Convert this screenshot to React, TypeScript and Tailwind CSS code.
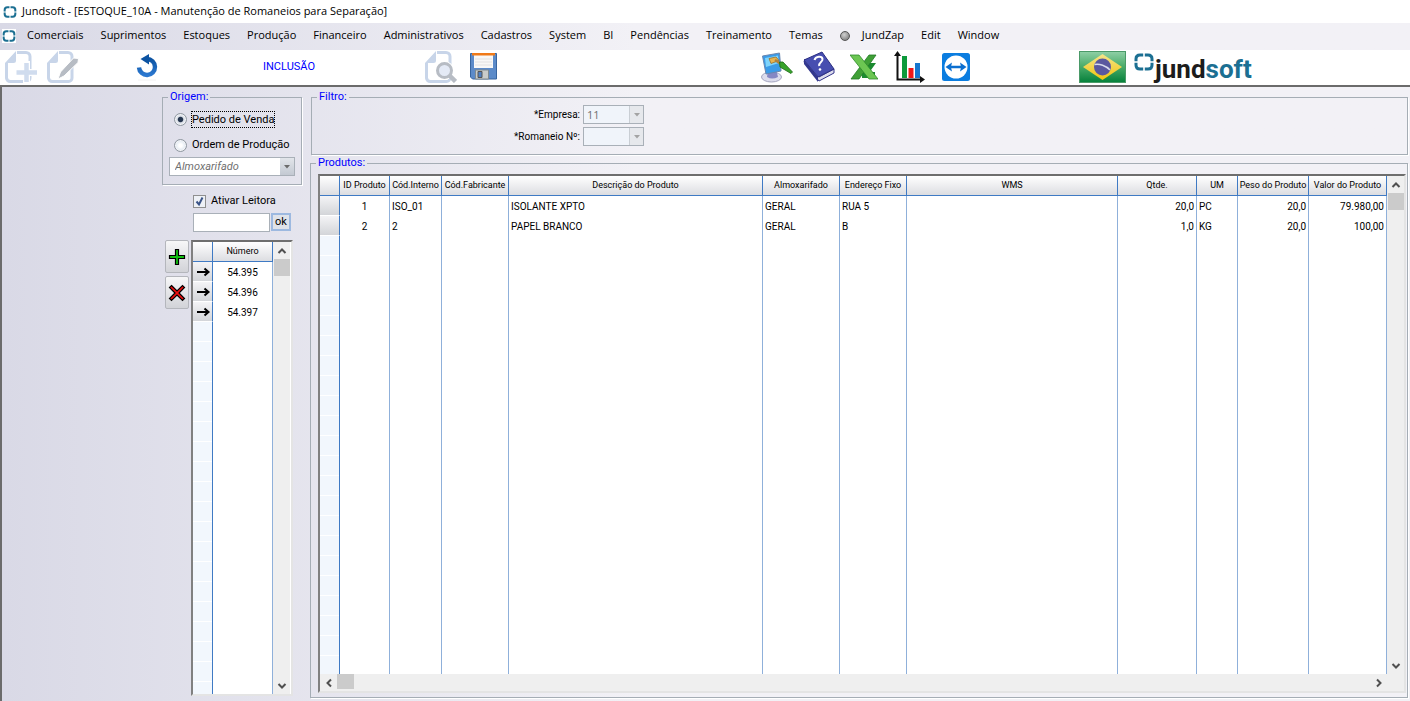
import { useState, type ReactNode } from 'react';

const menuLeft = [
  'Comerciais', 'Suprimentos', 'Estoques', 'Produção', 'Financeiro', 'Administrativos',
  'Cadastros', 'System', 'BI', 'Pendências', 'Treinamento', 'Temas',
];

const columns = [
  { label: 'ID Produto', width: 'w-[50px]', align: 'text-center' },
  { label: 'Cód.Interno', width: 'w-[52px]', align: 'text-left' },
  { label: 'Cód.Fabricante', width: 'w-[67px]', align: 'text-left' },
  { label: 'Descrição do Produto', width: '', align: 'text-left' },
  { label: 'Almoxarifado', width: 'w-[77px]', align: 'text-left' },
  { label: 'Endereço Fixo', width: 'w-[67px]', align: 'text-left' },
  { label: 'WMS', width: 'w-[211px]', align: 'text-left' },
  { label: 'Qtde.', width: 'w-[79px]', align: 'text-right' },
  { label: 'UM', width: 'w-[41px]', align: 'text-left' },
  { label: 'Peso do Produto', width: 'w-[71px]', align: 'text-right' },
  { label: 'Valor do Produto', width: 'w-[78px]', align: 'text-right' },
];

const products = [
  ['1', 'ISO_01', '', 'ISOLANTE XPTO', 'GERAL', 'RUA 5', '', '20,0', 'PC', '20,0', '79.980,00'],
  ['2', '2', '', 'PAPEL BRANCO', 'GERAL', 'B', '', '1,0', 'KG', '20,0', '100,00'],
];

const orders = ['54.395', '54.396', '54.397'];

const headCell =
  'h-5 border-b border-r border-[#3f7ac4] bg-linear-to-b from-white to-[#dcdde1] p-0 text-[9px] font-normal leading-[19px]';
const rowHead = 'h-5 border-r border-r-[#3f7ac4] border-b border-b-white bg-linear-to-b from-[#f4f4f6] to-[#d3d5d9] p-0';
const stripes =
  'border-r border-[#3f7ac4] bg-[repeating-linear-gradient(to_bottom,#f2f7fd_0px,#f2f7fd_19px,#ffffff_19px,#ffffff_20px)] p-0';

function Brand({ className }: { className: string }) {
  return (
    <svg viewBox="0 0 20 18" className={className} fill="none" stroke="#1b6f92" strokeWidth="3" aria-hidden="true">
      <path d="M9.200 2H6Q2 2 2 6v2.200M10.800 2H14q4 0 4 4v2.200M9.200 16H6q-4 0-4-4V9.800M10.800 16H14q4 0 4-4V9.800" />
    </svg>
  );
}

function Chevron({ d }: { d: string }) {
  return (
    <svg viewBox="0 0 10 10" className="size-[10px]" fill="none" stroke="#505050" strokeWidth="2" aria-hidden="true">
      <path d={d} />
    </svg>
  );
}

function VerticalScroll() {
  return (
    <div className="flex w-[17px] shrink-0 flex-col bg-[#efefef] pl-px">
      <button type="button" aria-label="Rolar para cima" className="flex h-[17px] items-center justify-center">
        <Chevron d="M1.500 7 5 3.500 8.500 7" />
      </button>
      <div className="flex-1">
        <div className="h-[17px] bg-[#cbcbcb]" />
      </div>
      <button type="button" aria-label="Rolar para baixo" className="flex h-[17px] items-center justify-center">
        <Chevron d="M1.500 3 5 6.500 8.500 3" />
      </button>
    </div>
  );
}

function Group({ title, className, children }: { title: string; className: string; children: ReactNode }) {
  return (
    <fieldset className={`min-w-0 border border-[#a5adb5] shadow-[1px_1px_0_#ffffff] ${className}`}>
      <legend className="ml-[5px] px-0.5 text-[11px] leading-4 text-[#0000ff]">{title}</legend>
      {children}
    </fieldset>
  );
}

function Arrow({ className }: { className: string }) {
  return (
    <span className={`pointer-events-none absolute inset-y-px right-px flex w-[14px] items-center justify-center ${className}`}>
      <svg viewBox="0 0 6 4" className="w-[6px]" aria-hidden="true">
        <path d="M0 0h6L3 3.500z" fill="currentColor" />
      </svg>
    </span>
  );
}

function FilterSelect({ id, label, value }: { id: string; label: string; value: string }) {
  return (
    <div className="flex items-center gap-[3px]">
      <label htmlFor={id} className="w-[262px] text-right text-[10px]">{label}</label>
      <div className="relative w-[61px]">
        <select
          id={id}
          disabled
          className="block h-[19px] w-full appearance-none border border-[#a9b0b8] bg-[#f0f4fa] pl-[3px] font-['Open_Sans',sans-serif] text-[11px] leading-4 text-[#6f6f6f] opacity-100"
        >
          <option>{value}</option>
        </select>
        <Arrow className="border-l border-[#c9ced4] bg-[#e6e8ec] text-[#a3a3a3]" />
      </div>
    </div>
  );
}

function ToolButton({ label, className, children }: { label: string; className: string; children: ReactNode }) {
  return (
    <button type="button" aria-label={label} className={`flex h-8 shrink-0 items-center justify-center ${className}`}>
      {children}
    </button>
  );
}

function Sheet() {
  return (
    <>
      <path d="M12 1.500h9a4 4 0 0 1 4 4V27a3.500 3.500 0 0 1-3.500 3.500h-16A4 4 0 0 1 1.500 27V12" fill="none" stroke="#c8d5e9" strokeWidth="3" />
      <path d="M0 12 11 0v9.500a2.500 2.500 0 0 1-2.500 2.500z" fill="#c8d5e9" />
    </>
  );
}

function Toolbar() {
  return (
    <div className="flex h-[35px] shrink-0 items-start overflow-hidden bg-white pl-[5px] pt-px">
      <ToolButton label="Novo" className="w-8">
        <svg viewBox="0 0 32 32" className="size-8">
          <Sheet />
          <path d="M21.500 10v22M10 21.500h22" stroke="#fff" strokeWidth="7" />
          <path d="M21.500 12v19M11.500 21.500H32" stroke="#d0dcee" strokeWidth="4.500" />
        </svg>
      </ToolButton>
      <ToolButton label="Editar" className="ml-[10px] w-8">
        <svg viewBox="0 0 32 32" className="size-8">
          <Sheet />
          <path d="m11 28 2.500-7L26.500 7l5 .5-.5 4-14 13.500z" fill="#b7bcc4" stroke="#fff" strokeWidth="1" />
        </svg>
      </ToolButton>
      <ToolButton label="Desfazer" className="ml-[57px] w-6">
        <svg viewBox="0 0 24 28" className="h-7 w-6">
          <defs>
            <linearGradient id="undo" x1="0" y1="0" x2="0" y2="1">
              <stop offset="0" stopColor="#0c53a2" />
              <stop offset="1" stopColor="#2b78d0" />
            </linearGradient>
          </defs>
          <path d="M3 14.500a8 8 0 1 0 8-8.500" fill="none" stroke="url(#undo)" strokeWidth="4.400" />
          <path d="M4.500 6 13 1v10.500z" fill="#0c53a2" />
          <path d="M2 27h18" stroke="#f2f2f2" />
        </svg>
      </ToolButton>
      <span className="ml-[103px] w-[162px] text-[11px] leading-8 text-[#0000ff]">INCLUSÃO</span>
      <ToolButton label="Pesquisar" className="w-8">
        <svg viewBox="0 0 32 32" className="size-8">
          <Sheet />
          <circle cx="19.500" cy="19.500" r="9.500" fill="#fff" />
          <path d="m24 24 6.500 6.500" stroke="#b7bcc4" strokeWidth="4.500" />
          <circle cx="19.500" cy="19.500" r="7" fill="#e4eaf6" stroke="#b7bcc4" strokeWidth="3" />
        </svg>
      </ToolButton>
      <ToolButton label="Salvar" className="ml-[13px] w-[27px]">
        <svg viewBox="0 0 27 28" className="h-7 w-[27px]">
          <path d="M.5.500h26V26h-24l-2-2z" fill="#5c8bc9" stroke="#38659f" />
          <path d="M4 1h19v14H4z" fill="#f8f8f7" />
          <path d="M2 0h23v2.500H2z" fill="#f07a18" />
          <path d="M5 6h17M5 9h17M5 12h17" stroke="#e2e2e2" />
          <path d="M5.500 17h13v9h-13z" fill="#c9ccca" stroke="#7f8a8f" />
          <path d="M8 18.500h4v6H8z" fill="#4f80c2" stroke="#555" />
        </svg>
      </ToolButton>
      <ToolButton label="Aparência" className="ml-[264px] w-8">
        <svg viewBox="0 0 32 32" className="size-8">
          <ellipse cx="10.500" cy="26" rx="10" ry="5" fill="#dcdcec" stroke="#a3a4bf" />
          <path d="m7 19 8-1 2 8q-6 3-11 0z" fill="#8487c4" />
          <path d="m1.500 5 17-3 1.500 18-15 3z" fill="#3a9be8" stroke="#6a86ae" />
          <path d="m4 7 13-2.500L18 12 5 16z" fill="#7fd4fb" />
          <path d="m8 7.500 7-1.500 3 3.500-8 3z" fill="#e6b451" stroke="#92641d" strokeWidth=".7" />
          <path d="m14 9 6 4" stroke="#b1803a" strokeWidth="2.500" />
          <path d="m18.500 11 3.500 0 9.500 10-1.500 1.500L19 16z" fill="#38a32c" stroke="#1d6a18" strokeWidth=".8" />
        </svg>
      </ToolButton>
      <ToolButton label="Ajuda" className="ml-[10px] w-8">
        <svg viewBox="0 0 32 32" className="size-8">
          <path d="m1 11 15 19 15-8v-4L16 26 2 8z" fill="#dcdcec" stroke="#32348a" />
          <path d="M1 9 19 1l12 17-16 8z" fill="#474eb0" stroke="#2b2f83" />
          <path d="m1 9 14 17v5L1 13z" fill="#31368d" />
          <path d="M11.500 9c1-4 7.500-4.500 8-1 .4 3-4 3-3.300 7" fill="none" stroke="#fff" strokeWidth="2" />
          <circle cx="17" cy="18.500" r="1.300" fill="#fff" />
        </svg>
      </ToolButton>
      <ToolButton label="Exportar para Excel" className="ml-[15px] w-7">
        <svg viewBox="0 0 28 28" className="size-7">
          <path d="M15 10h11l-5 7h-7zM12 19h13v6H12z" fill="#1b8a30" />
          <path d="m19 2 7 0L9 26H1z" fill="#3f9f36" stroke="#217a24" strokeWidth=".8" />
          <path d="M0 2h9l19 24h-9z" fill="#6cc652" stroke="#2e8b2c" strokeWidth=".8" />
        </svg>
      </ToolButton>
      <ToolButton label="Gráficos" className="ml-4 w-8">
        <svg viewBox="0 0 32 32" className="size-8">
          <path d="M8 5h5v22H8z" fill="#0c9a3b" />
          <path d="M14.500 17h5v10h-5z" fill="#f01818" />
          <path d="M21 12h5v15h-5z" fill="#1677cf" />
          <path d="M3.500 4v24.500H28" fill="none" stroke="#111" strokeWidth="2" />
          <path d="M0 5 3.500 0 7 5zM26 25v7l5-3.500z" fill="#111" />
        </svg>
      </ToolButton>
      <ToolButton label="Acesso remoto" className="ml-4 w-7">
        <svg viewBox="0 0 28 28" className="size-7">
          <rect width="28" height="28" rx="2.500" fill="#0b7de0" />
          <circle cx="14" cy="14" r="11.500" fill="#fff" />
          <path d="m3.500 14 6.500-4.500-.8 3.200h9.600L18 9.500l6.500 4.500-6.500 4.500.8-3.200H9.200l.8 3.200z" fill="#0b6fd0" />
        </svg>
      </ToolButton>
      <ToolButton label="Idioma: português" className="ml-[109px] w-12">
        <svg viewBox="0 0 48 32" className="h-8 w-12">
          <defs>
            <linearGradient id="flag" x1="0" y1="0" x2="0" y2="1">
              <stop offset="0" stopColor="#8fd0a6" />
              <stop offset=".45" stopColor="#4fae6d" />
              <stop offset="1" stopColor="#04803a" />
            </linearGradient>
            <linearGradient id="rhomb" x1="0" y1="0" x2="0" y2="1">
              <stop offset="0" stopColor="#f4e58d" />
              <stop offset="1" stopColor="#f2c40c" />
            </linearGradient>
          </defs>
          <rect x=".5" y=".5" width="46" height="31" fill="url(#flag)" stroke="#4a9a68" />
          <path d="M4 16 23.500 3 43 16 23.500 29z" fill="url(#rhomb)" />
          <circle cx="23.500" cy="16" r="8.500" fill="#5a589f" />
          <path d="M15.500 13.500c5-1 11.500 1 15.500 5.500" fill="none" stroke="#d8dced" strokeWidth="1.500" />
        </svg>
      </ToolButton>
      <div className="ml-[7px] flex items-start gap-px pt-0.5">
        <Brand className="h-[18px] w-5" />
        <span className="font-['Roboto',sans-serif] text-[26px] font-bold leading-8 text-[#1c1c1c]">
          jund<span className="text-[#1b6f92]">soft</span>
        </span>
      </div>
    </div>
  );
}

function Origin() {
  const [origin, setOrigin] = useState('venda');
  const radio =
    "size-[13px] shrink-0 appearance-none rounded-full border border-[#8f97a0] bg-[radial-gradient(circle,#ffffff_20%,#d4e0ec_80%)] shadow-[inset_0_0_0_1px_#f4f4f6] checked:bg-[radial-gradient(circle,#26364f_0%,#26364f_28%,#dfe3ea_42%,#d4e0ec_100%)]";
  return (
    <Group title="Origem:" className="w-[140px] pb-2">
      <div className="flex flex-col gap-1.5 px-[6px] pt-1">
        <div className="flex h-5 items-center gap-1 pl-[5px]">
          <input id="venda" name="origem" type="radio" className={radio} checked={origin === 'venda'} onChange={() => setOrigin('venda')} />
          <label htmlFor="venda" className="whitespace-nowrap border border-dotted border-black text-[11px] leading-[15px]">Pedido de Venda</label>
        </div>
        <div className="flex h-5 items-center gap-[5px] pl-[5px]">
          <input id="producao" name="origem" type="radio" className={radio} checked={origin === 'producao'} onChange={() => setOrigin('producao')} />
          <label htmlFor="producao" className="whitespace-nowrap text-[11px] leading-4">Ordem de Produção</label>
        </div>
      </div>
      <div className="relative mx-[6px] mt-0.5">
        <select
          aria-label="Almoxarifado"
          className="block h-[19px] w-full appearance-none border border-[#a9b0b8] bg-white pl-[5px] text-[11px] italic leading-4 text-[#707070]"
        >
          <option>Almoxarifado</option>
        </select>
        <Arrow className="bg-linear-to-b from-[#e2e5ea] to-[#c3c9d2] text-[#6b6b6b]" />
      </div>
    </Group>
  );
}

function Orders() {
  const side =
    'flex h-[33px] w-6 items-center justify-center rounded-[2px] border border-[#b4b6bc] bg-linear-to-b from-[#f7f7f8] to-[#d2d3d8]';
  return (
    <div className="flex min-h-0 flex-1 gap-0.5">
      <div className="flex flex-col gap-[3px]">
        <button type="button" aria-label="Adicionar" className={side}>
          <svg viewBox="0 0 18 18" className="size-[18px]">
            <path d="M7.500 1.500h3v6h6v3h-6v6h-3v-6h-6v-3h6z" fill="#10c010" stroke="#000" strokeWidth="1.200" />
          </svg>
        </button>
        <button type="button" aria-label="Remover" className={side}>
          <svg viewBox="0 0 18 18" className="size-[18px]">
            <path d="M3.500 1.500 9 7l5.500-5.500 2 2L11 9l5.500 5.500-2 2L9 11l-5.500 5.500-2-2L7 9 1.500 3.500z" fill="#f01010" stroke="#000" strokeWidth="1.200" />
          </svg>
        </button>
      </div>
      <div className="flex w-[102px] border-2 border-b-[#e4e4e4] border-l-[#808080] border-r-[#e4e4e4] border-t-[#6e6e6e] bg-white">
        <table className="h-full w-[80px] table-fixed border-separate border-spacing-0 text-[10px] leading-[19px]">
          <thead>
            <tr>
              <th aria-label="Seleção" className={`${headCell} w-5`} />
              <th className={headCell}>Número</th>
            </tr>
          </thead>
          <tbody>
            {orders.map((order) => (
              <tr key={order}>
                <td className={rowHead}>
                  <svg viewBox="0 0 18 12" className="mx-auto h-3 w-[18px]" aria-hidden="true">
                    <path d="M3 6h11M10.500 2.500 14.500 6l-4 3.500" fill="none" stroke="#000" strokeWidth="2" />
                  </svg>
                </td>
                <td className="h-5 border-r border-[#8fb0da] p-0 text-center">{order}</td>
              </tr>
            ))}
            <tr className="h-full">
              <td className={stripes} />
              <td className="border-r border-[#8fb0da] p-0" />
            </tr>
          </tbody>
        </table>
        <VerticalScroll />
      </div>
    </div>
  );
}

function Products() {
  return (
    <div className="flex h-full flex-col border-2 border-b-[#e4e4e4] border-l-[#808080] border-r-[#e4e4e4] border-t-[#6e6e6e] bg-white">
      <div className="flex min-h-0 flex-1">
        <table className="h-full w-full min-w-0 flex-1 table-fixed border-separate border-spacing-0 text-[10px] leading-[19px]">
          <colgroup>
            <col className="w-5" />
            {columns.map((c) => (
              <col key={c.label} className={c.width} />
            ))}
          </colgroup>
          <thead>
            <tr>
              <th aria-label="Seleção" className={headCell} />
              {columns.map((c) => (
                <th key={c.label} className={`${headCell} whitespace-nowrap`}>{c.label}</th>
              ))}
            </tr>
          </thead>
          <tbody>
            {products.map((row) => (
              <tr key={row[0]}>
                <td className={rowHead} />
                {row.map((value, i) => (
                  <td key={columns[i].label} className={`h-5 whitespace-nowrap border-r border-[#8fb0da] px-0.5 py-0 ${columns[i].align}`}>
                    {value}
                  </td>
                ))}
              </tr>
            ))}
            <tr className="h-full">
              <td className={stripes} />
              {columns.map((c) => (
                <td key={c.label} className="border-r border-[#8fb0da] p-0" />
              ))}
            </tr>
          </tbody>
        </table>
        <VerticalScroll />
      </div>
      <div className="flex h-[17px] shrink-0 bg-[#efefef] pr-[17px]">
        <button type="button" aria-label="Rolar para a esquerda" className="flex w-[17px] items-center justify-center">
          <Chevron d="M7 1.500 3.500 5 7 8.500" />
        </button>
        <div className="flex-1 pb-0.5">
          <div className="h-full w-[17px] bg-[#cbcbcb]" />
        </div>
        <button type="button" aria-label="Rolar para a direita" className="flex w-[17px] items-center justify-center">
          <Chevron d="M3 1.500 6.500 5 3 8.500" />
        </button>
      </div>
    </div>
  );
}

export default function App() {
  const [reader, setReader] = useState(true);
  return (
    <div className="flex h-screen flex-col overflow-hidden bg-white font-['Roboto',sans-serif] text-black">
      <header className="shrink-0 font-['Open_Sans',sans-serif] text-[11px]">
        <div className="flex h-[23px] items-center gap-[5px] pl-[3px]">
          <Brand className="h-3 w-[14px]" />
          <h1>Jundsoft - [ESTOQUE_10A - Manutenção de Romaneios para Separação]</h1>
        </div>
        <nav className="flex h-[27px] items-center gap-[17px] whitespace-nowrap bg-linear-to-r from-[#d9d9e6] to-[#f2f1f6] to-45% pb-0.5 pl-[2px]">
          <span className="-mr-1.5 bg-white py-px">
            <Brand className="h-3 w-[14px]" />
          </span>
          {menuLeft.map((item) => (
            <button type="button" key={item}>{item}</button>
          ))}
          <button type="button" className="flex items-center gap-3">
            <span className="size-[10px] rounded-full border border-[#555] bg-[radial-gradient(circle_at_40%_35%,#d0d0d0,#6f6f6f)]" />
            JundZap
          </button>
          <button type="button">Edit</button>
          <button type="button">Window</button>
        </nav>
      </header>
      <Toolbar />
      <main className="flex min-h-0 flex-1 border-l-2 border-t-2 border-[#6b6b6b] bg-linear-to-r from-[#d9d9e6] to-[#f2f1f6] to-45% pb-[3px] pr-0.5 pt-0.5">
        <section className="flex w-[308px] shrink-0 flex-col pb-0.5 pl-[160px]">
          <Origin />
          <div className="flex items-center gap-[5px] pl-[31px] pt-2">
            <span className="relative size-[13px]">
              <input
                id="leitora"
                type="checkbox"
                checked={reader}
                onChange={() => setReader(!reader)}
                className="peer block size-[13px] appearance-none border border-[#8f8f8f] bg-[#eef1f6]"
              />
              <svg viewBox="0 0 13 13" className="pointer-events-none absolute inset-0 hidden size-[13px] peer-checked:block" aria-hidden="true">
                <path d="M3.500 6.500 6 9.500l3.500-7" fill="none" stroke="#3b5488" strokeWidth="2" />
              </svg>
            </span>
            <label htmlFor="leitora" className="text-[11px] leading-4">Ativar Leitora</label>
          </div>
          <div className="flex gap-px pb-2 pl-[31px] pt-1">
            <input aria-label="Código lido" className="h-[19px] w-[77px] border border-[#a9b0b8] bg-white px-1 text-[11px]" />
            <button type="button" className="h-[18px] w-5 border-2 border-[#9db9e0] bg-[#dfe3ea] text-[11px] leading-[14px]">ok</button>
          </div>
          <div className="flex min-h-0 flex-1 pl-[3px]">
            <Orders />
          </div>
        </section>
        <section className="flex min-w-0 flex-1 flex-col">
          <Group title="Filtro:" className="ml-px h-[66px] shrink-0">
            <div className="flex flex-col gap-[3px] pl-[6px]">
              <FilterSelect id="empresa" label="*Empresa:" value="11" />
              <FilterSelect id="romaneio" label="*Romaneio Nº:" value="" />
            </div>
          </Group>
          <Group title="Produtos:" className="flex min-h-0 flex-1 flex-col">
            <div className="h-full pb-1 pl-[7px] pr-px pt-[3px]">
              <Products />
            </div>
          </Group>
        </section>
      </main>
    </div>
  );
}
